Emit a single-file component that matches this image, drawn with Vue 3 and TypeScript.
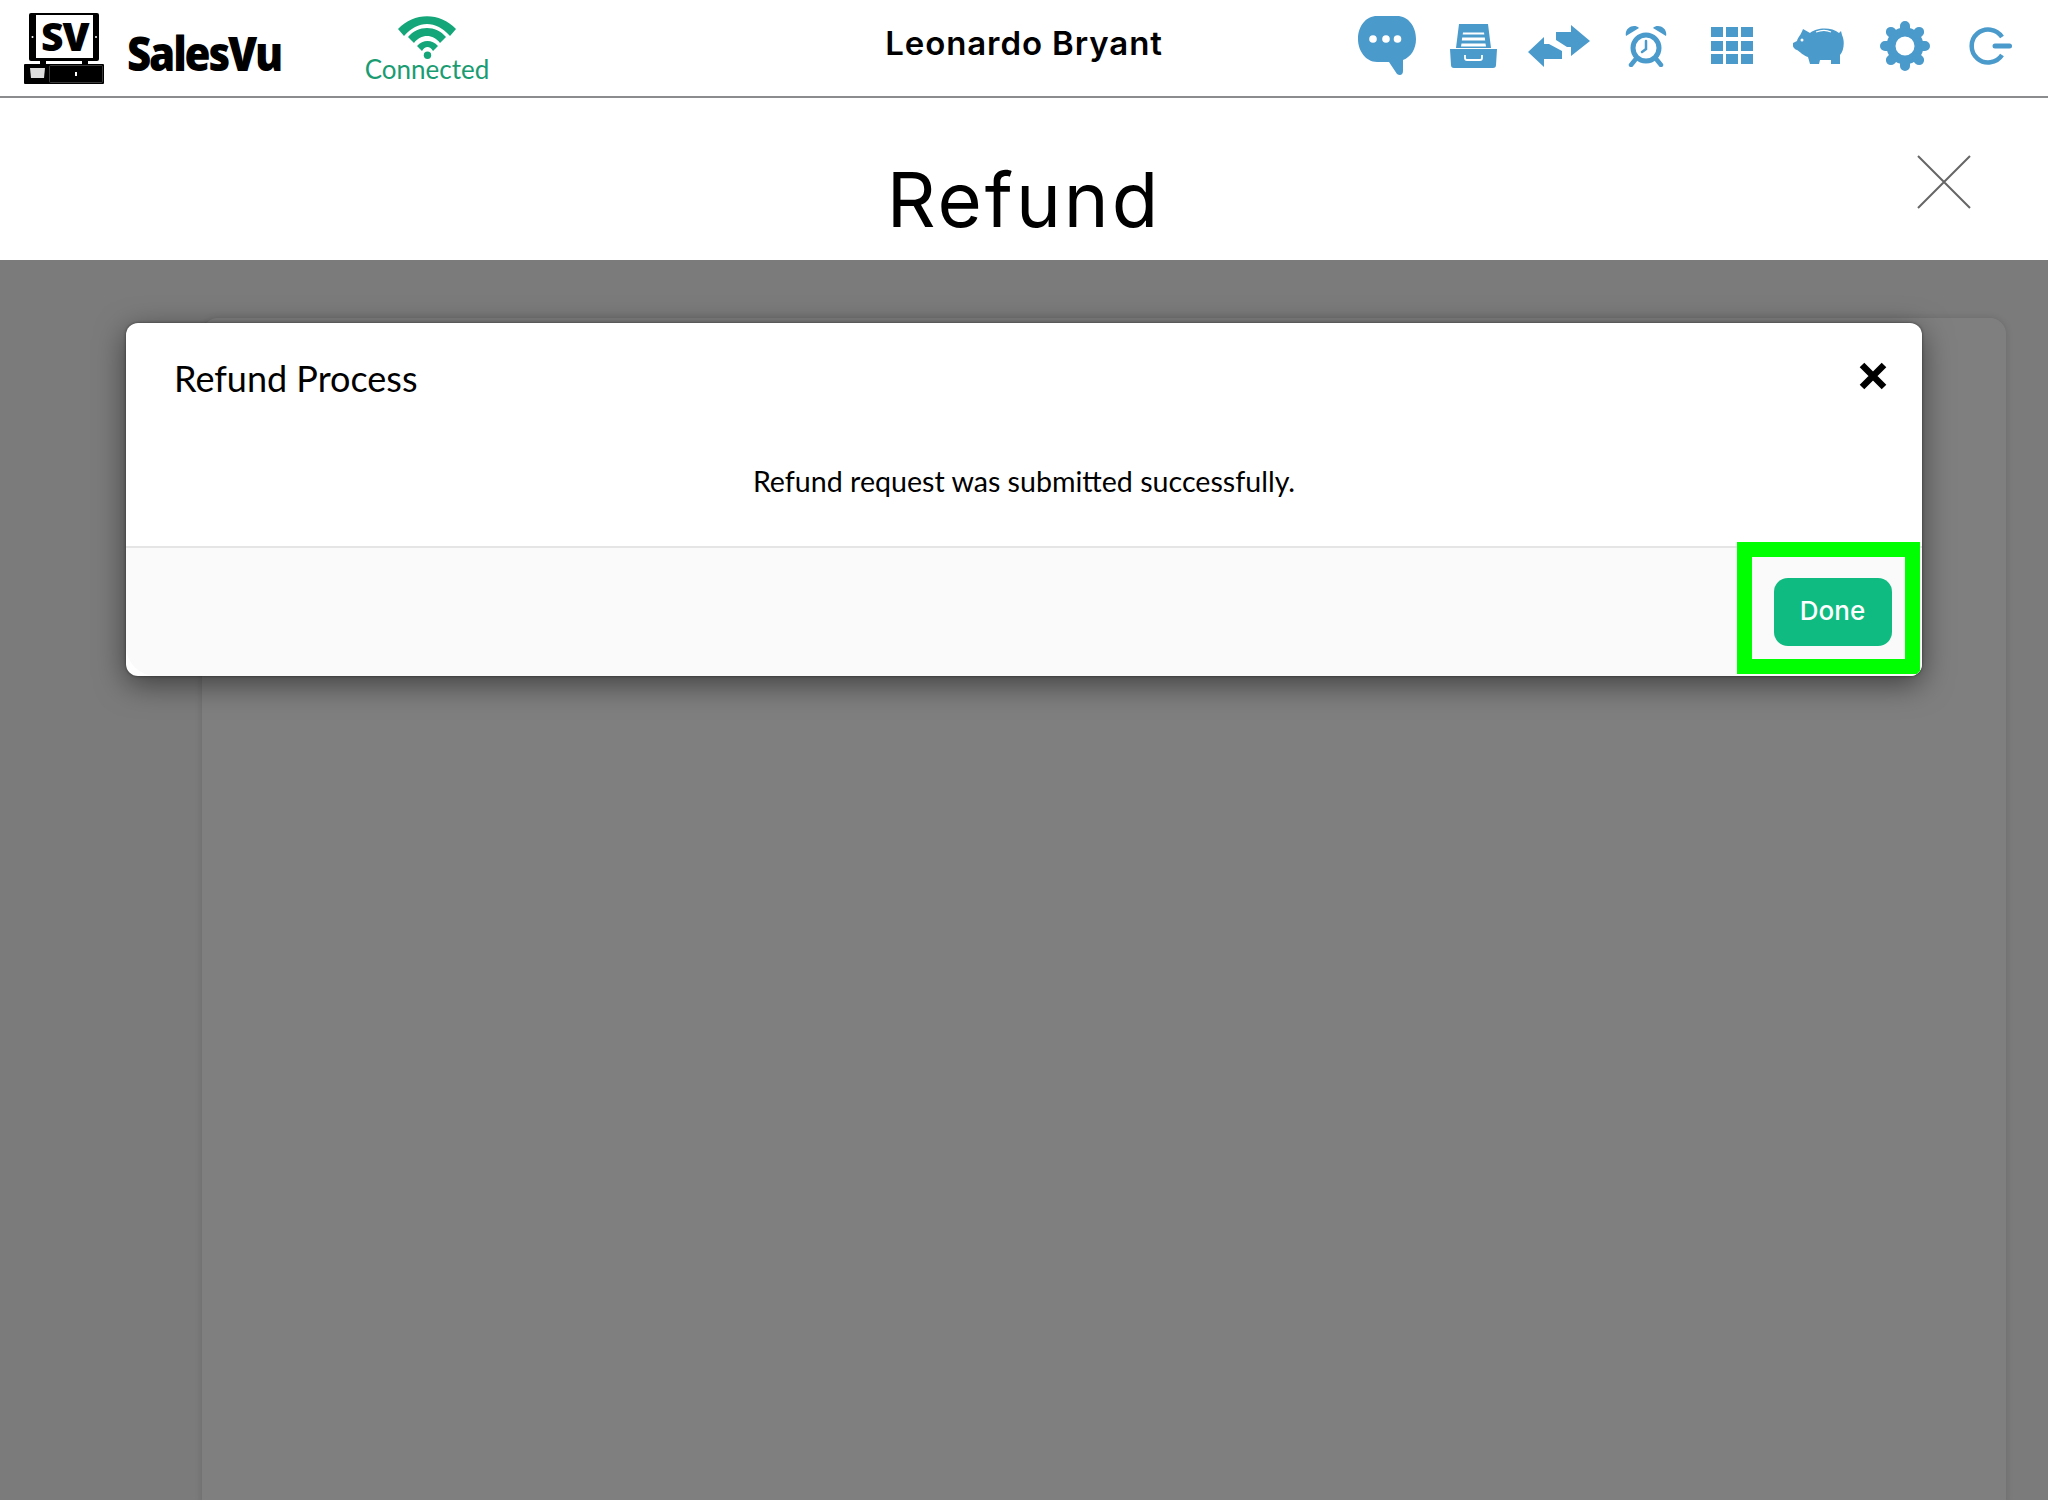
<script setup lang="ts">
const title = 'Refund'
const userName = 'Leonardo Bryant'
</script>

<template>
  <div class="page">
    <header class="topbar">
      <div class="brand">
        <svg class="logo" viewBox="0 0 80 71" width="80" height="71">
          <rect x="5" y="0" width="70" height="48" rx="2" fill="#000" />
          <rect x="12" y="2" width="57" height="43" fill="#fff" />
          <circle cx="8.5" cy="24" r="1" fill="#fff" />
          <circle cx="72" cy="24" r="1" fill="#fff" />
          <text x="17" y="38" class="logo-text">SV</text>
          <rect x="16" y="48" width="6" height="3" fill="#000" />
          <rect x="58" y="48" width="6" height="3" fill="#000" />
          <rect x="0" y="51" width="80" height="20" rx="1" fill="#000" />
          <rect x="25.5" y="52.5" width="53" height="17" rx="1" fill="none" stroke="#555" stroke-width="0.7" />
          <path d="M6 55 H21 L20 65 H7 Z" fill="#ddd" />
          <rect x="51" y="59" width="2" height="4" fill="#fff" />
        </svg>
        <span class="brand-name">SalesVu</span>
      </div>
      <div class="status">
        <svg viewBox="0 0 58 43" width="58" height="43">
          <path d="M0 13 C16 -4 42 -4 58 13 L52 20 C38 4 20 4 6 20 Z" fill="#14a678" />
          <path d="M10 21 C20 9 38 9 48 21 L42 27 C35 17.7 23 17.7 16 27 Z" fill="#14a678" />
          <path d="M19 30 C25 23.3 34 23.3 40 30 L35 35 C32 29.7 27 29.7 24 35 Z" fill="#14a678" />
          <circle cx="29.5" cy="39.3" r="3.7" fill="#14a678" />
        </svg>
        <span class="status-label">Connected</span>
      </div>
      <div class="user-name">{{ userName }}</div>
      <nav class="tools">
        <!-- chat -->
        <svg viewBox="0 0 58 59" width="58" height="59">
          <path d="M19 0 H39 C50 0 58 10 58 23 C58 33 53 41 45 44 V55 C45 59 42 60 39 58 L31 46 H19 C8 46 0 35 0 23 C0 10 8 0 19 0 Z" fill="#4a9acc" />
          <circle cx="15" cy="23" r="3.8" fill="#fff" /><circle cx="28" cy="23" r="3.8" fill="#fff" /><circle cx="39.5" cy="23" r="3.8" fill="#fff" />
        </svg>
        <!-- drawer -->
        <svg viewBox="0 0 47 44" width="47" height="44">
          <path d="M9 0 H38 L41 24 H6 Z" fill="#4a9acc" />
          <path d="M13 8.5 H34 L34.3 10.5 H12.7 Z M12.2 13.5 H34.8 L35.2 16.5 H11.8 Z M11.5 19.5 H35.5 L36 22.5 H11 Z" fill="#fff" />
          <path d="M0 25 H47 L46 41 C46 43 45 44 43 44 H4 C2 44 1 43 1 41 Z" fill="#4a9acc" />
          <path d="M15 31 V34 C15 36 16 36 17 36 H30 C31 36 32 36 32 34 V31" fill="none" stroke="#fff" stroke-width="1.8" />
        </svg>
        <!-- transfer -->
        <svg viewBox="0 0 62 42" width="62" height="42">
          <path d="M43 0 L62 16 L43 31 V22 H39 L28 15 V7 H43 Z" fill="#4a9acc" />
          <path d="M16 12 V19 H21 L34 26 V34 H16 V42 L0 27 Z" fill="#4a9acc" />
        </svg>
        <!-- alarm -->
        <svg viewBox="0 0 42 42" width="42" height="42">
          <circle cx="21" cy="23" r="13" fill="none" stroke="#4a9acc" stroke-width="5" />
          <path d="M21 16 V24 L17 27" fill="none" stroke="#4a9acc" stroke-width="2.5" stroke-linecap="round" />
          <path d="M1 11 C-1 3 9 -2 14 3 Z M41 11 C43 3 33 -2 28 3 Z" fill="#4a9acc" />
          <path d="M10 35 L6 40 M32 35 L36 40" stroke="#4a9acc" stroke-width="4.5" stroke-linecap="round" />
        </svg>
        <!-- grid -->
        <div class="grid-icon">
          <span v-for="n in 9" :key="n"></span>
        </div>
        <!-- piggy -->
        <svg viewBox="0 0 51 37" width="51" height="37">
          <path d="M10 2 L17 6 C22 1 38 -1 46 6 L48 4 L49 8 C52 14 51 24 47 28 V37 H38 V33 H27 L26 37 H17 L15 30 C11 29 7 25 4 23 C1 22 -1 19 0 16 L4 14 C5 10 8 8 10 2 Z" fill="#4a9acc" />
          <circle cx="9" cy="13" r="1.5" fill="#fff" />
          <path d="M23 5 C28 3 34 3 38 5" fill="none" stroke="#fff" stroke-width="1.2" />
        </svg>
        <!-- gear -->
        <svg viewBox="0 0 50 50" width="50" height="50">
          <circle cx="25" cy="25" r="14" fill="none" stroke="#4a9acc" stroke-width="9" />
          <path d="M25 5 V8 M25 42 V45 M5 25 H8 M42 25 H45 M10.9 10.9 L13 13 M37 37 L39.1 39.1 M10.9 39.1 L13 37 M37 13 L39.1 10.9" stroke="#4a9acc" stroke-width="10" stroke-linecap="round" />
        </svg>
        <!-- logout -->
        <svg viewBox="0 0 43 38" width="43" height="38">
          <path d="M33 10 A16.5 16.5 0 1 0 33 28" fill="none" stroke="#4a9acc" stroke-width="4.5" />
          <path d="M26 19 H40.5" stroke="#4a9acc" stroke-width="5" stroke-linecap="round" />
        </svg>
      </nav>
    </header>

    <section class="title-row">
      <h1>{{ title }}</h1>
      <svg class="title-close" viewBox="0 0 54 54" width="54" height="54">
        <path d="M1 1 L53 53 M53 1 L1 53" stroke="#666" stroke-width="2" fill="none" />
      </svg>
    </section>

    <main class="content">
      <div class="card"></div>
      <div class="overlay"></div>
      <div class="modal">
        <div class="modal-head">
          <h2>Refund Process</h2>
          <svg class="modal-close" viewBox="0 0 28 28" width="28" height="28">
            <path d="M3 3 L25 25 M25 3 L3 25" stroke="#000" stroke-width="6.5" fill="none" />
          </svg>
        </div>
        <p class="modal-body">Refund request was submitted successfully.</p>
        <div class="modal-foot">
          <div class="highlight">
            <button type="button" class="done">Done</button>
          </div>
        </div>
      </div>
    </main>
  </div>
</template>

<style>
html, body {
  margin: 0;
  background: #fff;
}
</style>

<style scoped>
.page {
  width: 2048px;
  height: 1500px;
  display: flex;
  flex-direction: column;
  overflow: hidden;
  font-family: "Lato", "Liberation Sans", sans-serif;
  color: #000;
}

.topbar {
  height: 96px;
  flex: none;
  display: flex;
  align-items: center;
  border-bottom: 2px solid #8a8c8e;
  background: #fff;
  position: relative;
}

.brand {
  display: flex;
  align-items: center;
  margin-left: 24px;
  width: 341px;
}

.logo {
  overflow: visible;
}

.logo-text {
  font-family: "Open Sans", sans-serif;
  font-weight: 800;
  font-size: 39px;
  letter-spacing: -1px;
}

.brand-name {
  margin-left: 23px;
  margin-top: 10px;
  font-family: "Open Sans", sans-serif;
  font-weight: 800;
  font-size: 48px;
  line-height: 60px;
  letter-spacing: -2.5px;
  transform: scaleX(0.877);
  transform-origin: left center;
}

.status {
  display: flex;
  flex-direction: column;
  align-items: center;
  width: 124px;
  margin-top: 3px;
}

.status-label {
  margin-top: -4px;
  font-size: 26px;
  line-height: 28px;
  color: #1a9c72;
}

.user-name {
  position: absolute;
  left: 0;
  right: 0;
  top: 23px;
  text-align: center;
  font-family: "Inter", sans-serif;
  font-weight: 600;
  font-size: 33px;
  letter-spacing: 0.9px;
}

.tools {
  margin-left: auto;
  margin-right: 14px;
  margin-bottom: 5px;
  display: grid;
  grid-template-columns: repeat(8, 86.3px);
  justify-items: center;
  align-items: center;
}

.grid-icon {
  width: 42px;
  display: grid;
  grid-template-columns: repeat(3, 12px);
  grid-auto-rows: 10px;
  gap: 3.5px 3px;
}

.grid-icon span {
  background: #4a9acc;
}

.title-row {
  height: 162px;
  flex: none;
  position: relative;
  display: flex;
  justify-content: center;
  align-items: center;
  background: #fff;
}

.title-row h1 {
  margin: 0;
  margin-top: 39px;
  font-family: "Inter", sans-serif;
  font-weight: 400;
  font-size: 76px;
  letter-spacing: 3px;
}

.title-close {
  position: absolute;
  right: 77px;
  top: 57px;
}

.content {
  flex: 1;
  position: relative;
  background: #f7f7f7;
}

.card {
  position: absolute;
  left: 202px;
  right: 42px;
  top: 58px;
  bottom: -20px;
  background: #fff;
  border-radius: 16px;
  box-shadow: 0 0 8px rgba(0, 0, 0, 0.15);
}

.overlay {
  position: absolute;
  inset: 0;
  background: rgba(0, 0, 0, 0.5);
}

.modal {
  position: absolute;
  left: 126px;
  top: 63px;
  width: 1796px;
  height: 353px;
  background: #fff;
  border-radius: 12px;
  box-shadow: 0 8px 30px rgba(0, 0, 0, 0.5), 0 0 3px rgba(0, 0, 0, 0.5);
  display: flex;
  flex-direction: column;
  overflow: hidden;
}

.modal-head {
  display: flex;
  justify-content: space-between;
  align-items: flex-start;
  padding: 33px 35px 0 48px;
}

.modal-head h2 {
  margin: 0;
  font-weight: 400;
  font-size: 36px;
  line-height: 44px;
}

.modal-close {
  margin-top: 6px;
}

.modal-body {
  margin: 61px 0 0;
  text-align: center;
  font-size: 28.6px;
  line-height: 40px;
}

.modal-foot {
  margin-top: auto;
  height: 130px;
  box-sizing: border-box;
  background: #fafafa;
  border-top: 2px solid #e5e5e5;
  border-bottom-left-radius: 30px;
  position: relative;
}

.highlight {
  position: absolute;
  right: 2px;
  bottom: 2px;
  width: 183px;
  height: 132px;
  box-sizing: border-box;
  border: 15px solid #00ff00;
  display: flex;
  align-items: center;
  justify-content: center;
}

.done {
  width: 118px;
  height: 68px;
  margin-left: 8px;
  margin-top: 7px;
  padding-bottom: 3px;
  border: none;
  border-radius: 14px;
  background: #10bb82;
  color: #fff;
  font-family: "Inter", sans-serif;
  font-size: 26px;
  font-weight: 500;
}
</style>
